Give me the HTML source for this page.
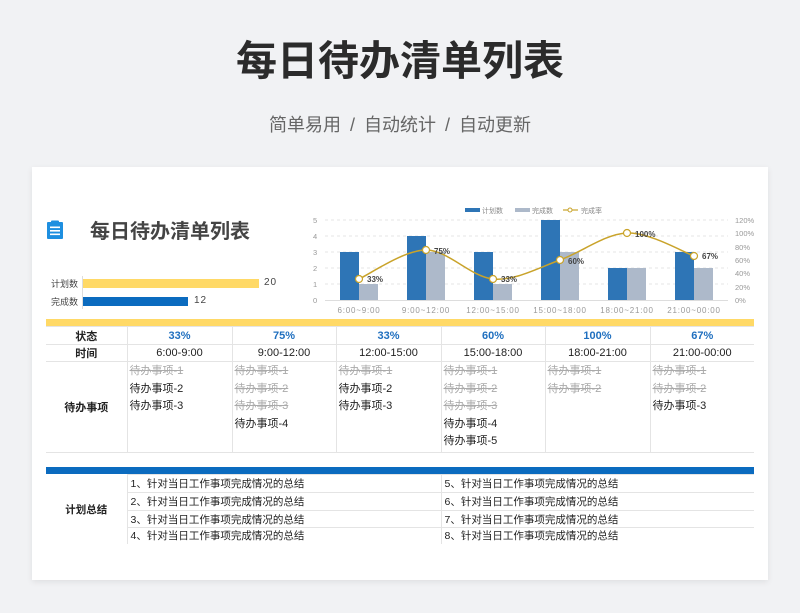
<!DOCTYPE html>
<html><head><meta charset="utf-8"><style>
*{margin:0;padding:0;box-sizing:border-box}
body{width:800px;height:613px;background:#f1f2f4;font-family:"Liberation Sans","Noto Sans CJK SC",sans-serif;position:relative;overflow:hidden;color:#222}
.a{position:absolute;white-space:nowrap}
.card{position:absolute;left:32px;top:167px;width:736px;height:413px;background:#fff;box-shadow:0 2px 6px rgba(0,0,0,.08)}
table{border-collapse:collapse;position:absolute;font-size:11px}
td{border:1px solid #e4e4e4;padding:0}
.s{color:#aaa;text-decoration:line-through}
.it div{height:17.6px;line-height:17.6px}
</style></head><body>
<div class="a" style="left:0;width:800px;top:36px;text-align:center;font-size:41px;font-weight:bold;color:#2b2b2b;line-height:50px">每日待办清单列表</div>
<div class="a" style="left:0;width:800px;top:113px;text-align:center;font-size:18px;color:#666;line-height:24px;word-spacing:4px">简单易用 / 自动统计 / 自动更新</div>
<div class="card"></div>
<svg class="a" style="left:45px;top:220px" width="20" height="20" viewBox="0 0 20 20"><rect x="2" y="2" width="16" height="17" rx="1" fill="#1e8fe0"/><rect x="6" y="0.5" width="8" height="3" rx="1" fill="#1e8fe0"/><rect x="5" y="6.5" width="10" height="1.6" fill="#fff"/><rect x="5" y="10" width="10" height="1.6" fill="#fff"/><rect x="5" y="13.5" width="10" height="1.6" fill="#fff"/></svg>
<div class="a" style="left:90px;top:219px;font-size:20px;font-weight:bold;color:#444;line-height:26px">每日待办清单列表</div>
<div class="a" style="left:51px;top:277px;font-size:9px;color:#444">计划数</div>
<div class="a" style="left:51px;top:295px;font-size:9px;color:#444">完成数</div>
<div class="a" style="left:82px;top:276px;width:1px;height:33px;background:#ddd"></div>
<div class="a" style="left:83px;top:279px;width:176px;height:9px;background:#ffd966"></div>
<div class="a" style="left:83px;top:297px;width:105px;height:9px;background:#0b6bbf"></div>
<div class="a" style="left:264px;top:277px;font-size:10px;color:#444;letter-spacing:1px">20</div>
<div class="a" style="left:194px;top:295px;font-size:10px;color:#444;letter-spacing:1px">12</div>
<svg class="a" style="left:0;top:0" width="800" height="330" font-family="Liberation Sans,Noto Sans CJK SC,sans-serif">
<g stroke="#ddd" stroke-dasharray="3,3" stroke-width="0.8">
<line x1="325" y1="220" x2="728" y2="220"/><line x1="325" y1="236" x2="728" y2="236"/><line x1="325" y1="252" x2="728" y2="252"/><line x1="325" y1="268" x2="728" y2="268"/><line x1="325" y1="284" x2="728" y2="284"/></g>
<line x1="325" y1="300.5" x2="728" y2="300.5" stroke="#ddd"/>
<g font-size="7.5" fill="#999"><text x="313" y="223">5</text><text x="313" y="239">4</text><text x="313" y="255">3</text><text x="313" y="271">2</text><text x="313" y="287">1</text><text x="313" y="303">0</text>
<text x="735" y="223">120%</text><text x="735" y="236">100%</text><text x="735" y="250">80%</text><text x="735" y="263">60%</text><text x="735" y="276">40%</text><text x="735" y="290">20%</text><text x="735" y="303">0%</text></g>
<g fill="#2e75b6"><rect x="340" y="252" width="19" height="48"/><rect x="407" y="236" width="19" height="64"/><rect x="474" y="252" width="19" height="48"/><rect x="541" y="220" width="19" height="80"/><rect x="608" y="268" width="19" height="32"/><rect x="675" y="252" width="19" height="48"/></g>
<g fill="#adb9ca"><rect x="359" y="284" width="19" height="16"/><rect x="426" y="252" width="19" height="48"/><rect x="493" y="284" width="19" height="16"/><rect x="560" y="252" width="19" height="48"/><rect x="627" y="268" width="19" height="32"/><rect x="694" y="268" width="19" height="32"/></g>
<path d="M359 279C370 274 404 250 426 250C448 250 471 277 493 279C515 281 538 268 560 260C582 252 605 234 627 233C649 232 683 252 694 256" fill="none" stroke="#c9a32a" stroke-width="1.5"/>
<g fill="#fff" stroke="#c9a32a" stroke-width="1.2"><circle cx="359" cy="279" r="3.5"/><circle cx="426" cy="250" r="3.5"/><circle cx="493" cy="279" r="3.5"/><circle cx="560" cy="260" r="3.5"/><circle cx="627" cy="233" r="3.5"/><circle cx="694" cy="256" r="3.5"/></g>
<g font-size="8" fill="#444" font-weight="bold"><text x="367" y="282">33%</text><text x="434" y="254">75%</text><text x="501" y="282">33%</text><text x="568" y="264">60%</text><text x="635" y="237">100%</text><text x="702" y="259">67%</text></g>
<g font-size="8" fill="#999" text-anchor="middle" letter-spacing="0.8"><text x="359" y="313">6:00~9:00</text><text x="426" y="313">9:00~12:00</text><text x="493" y="313">12:00~15:00</text><text x="560" y="313">15:00~18:00</text><text x="627" y="313">18:00~21:00</text><text x="694" y="313">21:00~00:00</text></g>
<g font-size="7" fill="#888"><rect x="465" y="208" width="15" height="4" fill="#2e75b6"/><text x="482" y="213">计划数</text><rect x="515" y="208" width="15" height="4" fill="#adb9ca"/><text x="532" y="213">完成数</text><line x1="563" y1="210" x2="578" y2="210" stroke="#c9a32a" stroke-width="1.2"/><circle cx="570" cy="210" r="2" fill="#fff" stroke="#c9a32a"/><text x="581" y="213">完成率</text></g>
</svg>
<div class="a" style="left:46px;top:319px;width:708px;height:7px;background:#ffd966"></div>
<table style="left:46px;top:326px;width:708px">
<colgroup><col style="width:81px"><col style="width:105px"><col style="width:104px"><col style="width:105px"><col style="width:104px"><col style="width:105px"><col style="width:104px"></colgroup>
<tr style="height:18px;text-align:center;font-weight:bold;color:#1f6fbf"><td style="color:#222;border-left:none">状态</td><td>33%</td><td>75%</td><td>33%</td><td>60%</td><td>100%</td><td style="border-right:none">67%</td></tr>
<tr style="height:17px;text-align:center"><td style="font-weight:bold;border-left:none">时间</td><td>6:00-9:00</td><td>9:00-12:00</td><td>12:00-15:00</td><td>15:00-18:00</td><td>18:00-21:00</td><td style="border-right:none">21:00-00:00</td></tr>
<tr style="height:89px;vertical-align:top"><td style="font-weight:bold;text-align:center;vertical-align:middle;border-left:none">待办事项</td>
<td class="it" style="padding:1px 2px"><div class="s">待办事项-1</div><div>待办事项-2</div><div>待办事项-3</div></td>
<td class="it" style="padding:1px 2px"><div class="s">待办事项-1</div><div class="s">待办事项-2</div><div class="s">待办事项-3</div><div>待办事项-4</div></td>
<td class="it" style="padding:1px 2px"><div class="s">待办事项-1</div><div>待办事项-2</div><div>待办事项-3</div></td>
<td class="it" style="padding:1px 2px"><div class="s">待办事项-1</div><div class="s">待办事项-2</div><div class="s">待办事项-3</div><div>待办事项-4</div><div>待办事项-5</div></td>
<td class="it" style="padding:1px 2px"><div class="s">待办事项-1</div><div class="s">待办事项-2</div></td>
<td class="it" style="padding:1px 2px;border-right:none"><div class="s">待办事项-1</div><div class="s">待办事项-2</div><div>待办事项-3</div></td></tr>
</table>
<div class="a" style="left:46px;top:467px;width:708px;height:7px;background:#0b6bbf"></div>
<table style="left:46px;top:474px;width:708px;font-size:10.5px">
<colgroup><col style="width:81px"><col style="width:314px"><col style="width:313px"></colgroup>
<tr style="height:18px"><td rowspan="4" style="border:none;font-weight:bold;text-align:center">计划总结</td><td style="padding-left:3px">1、针对当日工作事项完成情况的总结</td><td style="padding-left:3px;border-right:none">5、针对当日工作事项完成情况的总结</td></tr>
<tr style="height:18px"><td style="padding-left:3px">2、针对当日工作事项完成情况的总结</td><td style="padding-left:3px;border-right:none">6、针对当日工作事项完成情况的总结</td></tr>
<tr style="height:17px"><td style="padding-left:3px">3、针对当日工作事项完成情况的总结</td><td style="padding-left:3px;border-right:none">7、针对当日工作事项完成情况的总结</td></tr>
<tr style="height:16px"><td style="padding-left:3px;border-bottom:none">4、针对当日工作事项完成情况的总结</td><td style="padding-left:3px;border-right:none;border-bottom:none">8、针对当日工作事项完成情况的总结</td></tr>
</table>
</body></html>
